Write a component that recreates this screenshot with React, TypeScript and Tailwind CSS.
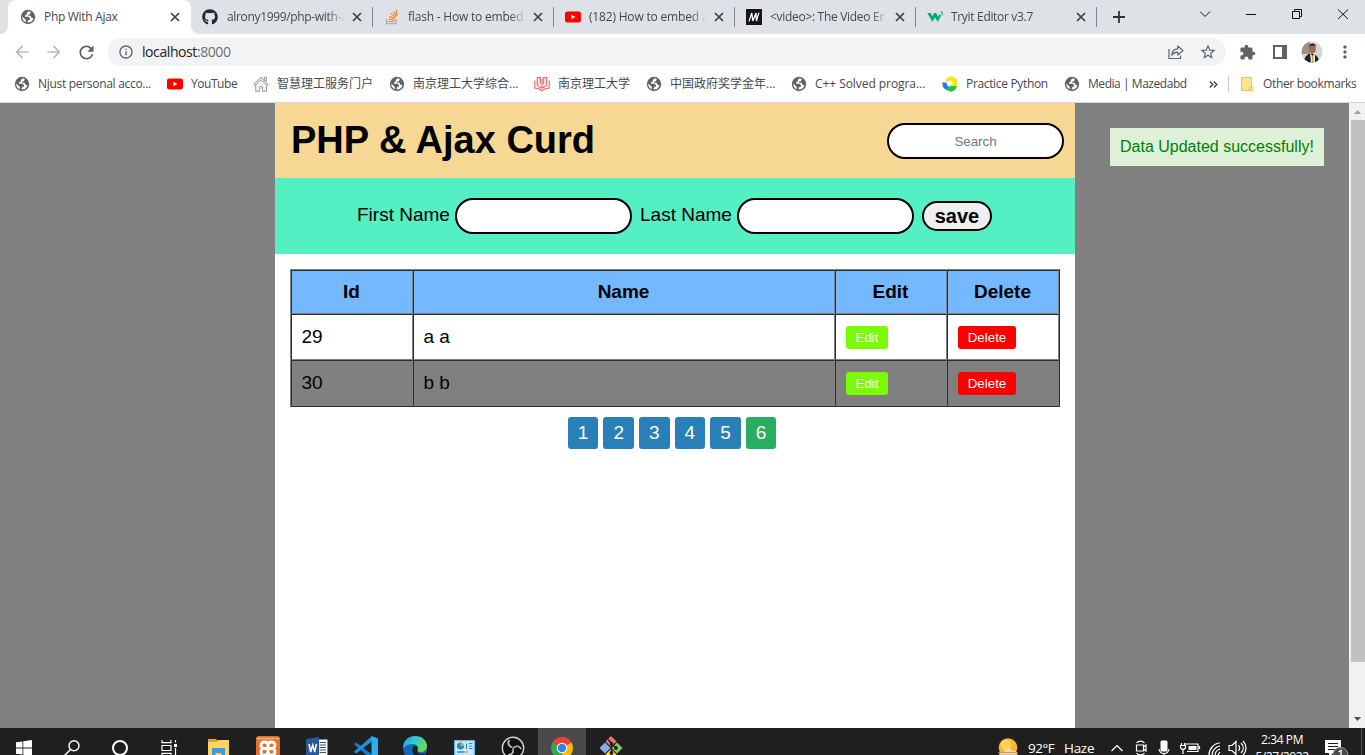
import React from "react";
import { FaGithub } from "react-icons/fa";
import {
  MdArrowBack,
  MdArrowForward,
  MdExtension,
  MdInfoOutline,
  MdMoreVert,
  MdRefresh,
  MdStarBorder,
} from "react-icons/md";

type IconProps = { className?: string };

const Globe = ({ className = "" }: IconProps) => (
  <svg viewBox="0 0 16 16" className={`size-4 shrink-0 ${className}`}>
    <circle cx="8" cy="8" r="7.2" fill="#5f6368" />
    <path d="M8.6 2.2 6.8 4v1.6L5 6.6v1.2h3.6l1.3 1.3v1.6H8.4l-1 2.8c3 .3 5.4-1.4 6-4.6h-1.7l-1.2-2.2H8.1V5.600h1.7l1-2.6z" fill="#fff" />
    <path d="M2.3 7.5 5.8 11v2.2A5.8 5.8 0 0 1 2.3 7.5z" fill="#fff" />
  </svg>
);

const YouTube = () => (
  <svg viewBox="0 0 16 16" className="size-4 shrink-0">
    <rect y="2.4" width="16" height="11.2" rx="2.4" fill="#f00" />
    <path d="M6.4 5.7v4.6l4-2.3z" fill="#fff" />
  </svg>
);

const StackOverflow = () => (
  <svg viewBox="0 0 16 16" className="size-4 shrink-0" fill="none">
    <path d="M2.5 10v4.6h9.6V10" stroke="#a9adb1" strokeWidth="1.3" />
    <path d="M4.2 12.5h6.2M4.4 10l6.1 1M5.1 7.2l5.7 2.4M6.9 4.4l4.6 4M9.6 2.2l3 5.2M12.3.7l.9 5.6" stroke="#f48024" strokeWidth="1.15" />
  </svg>
);

const Mdn = () => (
  <svg viewBox="0 0 16 16" className="size-4 shrink-0">
    <rect width="16" height="16" fill="#15141a" />
    <path d="M3 12.4 5.8 4 6.800 12 10 4 10.400 12 12.900 3.600" stroke="#fff" strokeWidth="1.3" fill="none" />
  </svg>
);

const W3 = () => (
  <svg viewBox="0 0 18 16" className="h-4 w-[18px] shrink-0">
    <path d="M.3 4h3.5l1.5 3.5L7 4h2.2l2 3.8L12.6 5l1.2 2.3-3 5.4L8 8.600l-2.6 4.1z" fill="#04aa6d" />
    <path d="M13.6 3h2.1l-1 1.4c1.6.1 1.3 2.2-1 1.8" stroke="#04aa6d" strokeWidth=".9" fill="none" />
  </svg>
);

const House = () => (
  <svg viewBox="0 0 16 16" className="size-4 shrink-0" fill="#f2f2f2" stroke="#9b9b9b" strokeWidth="1">
    <path d="M11.4 1h2v4h-2zM2.7 8.3v7h4v-4.6h2.8v4.6h4v-7L8 3.2z" />
    <path d="M.7 8.4 8 1.3l7.3 7.1-1.2 1.1L8 3.8 1.9 9.5z" />
  </svg>
);

const RedBook = () => (
  <svg viewBox="0 0 16 16" className="size-4 shrink-0" fill="none" stroke="#f06a6e" strokeWidth="1.2">
    <path d="M3.300 1v8.500L8 12.200l4.700-2.700V1M3.300 1.600h3v7M12.700 1.600h-3v7M8 2.500v9" />
    <path d="M.8 4.500v7.700l3.400.3L8 14.800l3.800-2.3 3.400-.3V4.500" />
  </svg>
);

const Python = () => (
  <svg viewBox="0 0 16 16" className="size-4 shrink-0">
    <path d="M3.400 4.600C4 1.600 6.600.4 9.400.5c4 .2 6.200 3 6 6.400-.1 2.500-1.400 4-3.800 4.100L8 11c-1-.2-.500-1.500.500-1.700 3-.3 3-3.300.8-4.300-1.500-.6-3 .1-3.800 1z" fill="#efe81a" />
    <path d="M.5 6.500h4.200c-.3 2.500.8 4 3.300 4.200l-2.800 2.600c.5 1 0 1.200-.7.800C1.500 12.600-.2 10 .5 6.500z" fill="#2878f0" />
    <path d="m6 12 2.500-1.800 6.400-.3c-.8 3.300-3.100 5.600-6.200 5.600-1.700 0-3-.6-4.100-1.700z" fill="#19c43c" />
  </svg>
);

const Cross = () => (
  <svg viewBox="0 0 10 10" className="size-[10px] shrink-0" stroke="#3c4043" strokeWidth="1.7">
    <path d="m1 1 8 8M9 1 1 9" />
  </svg>
);

const tabs = [
  { icon: <span className="-ml-px w-[18px]"><FaGithub size={16} color="#24292f" /></span>, title: "alrony1999/php-with-a", sep: false, track: "tracking-[-0.34px]" },
  { icon: <StackOverflow />, title: "flash - How to embed", sep: true, track: "tracking-[-0.2px]" },
  { icon: <YouTube />, title: "(182) How to embed a", sep: true, track: "tracking-[-0.18px]" },
  { icon: <Mdn />, title: "<video>: The Video Er", sep: true, track: "tracking-[-0.3px]" },
  { icon: <W3 />, title: "Tryit Editor v3.7", sep: true, track: "tracking-[-0.32px]" },
];

const TabStrip = () => (
  <div className="flex h-[34px] shrink-0 bg-[#dee1e6] text-xs text-[#45494d]">
    <div className="flex w-2 items-end bg-white">
      <div className="h-full w-2 rounded-br-[8px] bg-[#dee1e6]" />
    </div>
    <div className="w-[183px] bg-[#dee1e6]">
      <div className="flex h-full items-center rounded-t-[8px] bg-white pl-3">
        <Globe />
        <span className="ml-2 w-[126px] tracking-[-0.3px] whitespace-nowrap">Php With Ajax</span>
        <Cross />
      </div>
    </div>
    <div className="w-0">
      <div className="flex h-full w-2 items-end">
        <div className="size-2 bg-white"><div className="size-2 rounded-bl-[8px] bg-[#dee1e6]" /></div>
      </div>
    </div>
    {tabs.map((t) => (
      <div key={t.title} className="flex w-[181px] items-center">
        <div className={t.sep ? "h-5 w-px bg-[#80868b]" : "h-5 w-px"} />
        <div className="ml-[11px] flex w-6 shrink-0">{t.icon}</div>
        <span className={`w-[118px] shrink-0 whitespace-nowrap [mask-image:linear-gradient(to_right,#000_86%,transparent)] ${t.track}`}>
          {t.title}
        </span>
        <div className="ml-[7px] flex"><Cross /></div>
      </div>
    ))}
    <div className="flex w-[50px] items-center">
      <div className="h-5 w-px bg-[#80868b]" />
      <svg viewBox="0 0 12 12" className="ml-4 size-3" stroke="#303336" strokeWidth="1.8">
        <path d="M6 0v12M0 6h12" />
      </svg>
    </div>
    <svg viewBox="0 0 165 34" className="ml-auto h-[34px] w-[165px]" fill="none" stroke="#111">
      <path d="m0 11.500 5 5 5-5" />
      <path d="M46 14.500h10" />
      <path d="M92.500 11.500h7v7h-7zM94.500 11.500v-2h7v7h-2" />
      <path d="m138 9.500 10 9.500M148 9.500l-10 9.500" />
    </svg>
  </div>
);

const Avatar = () => (
  <svg viewBox="0 0 22 22" className="size-[22px]">
    <defs>
      <clipPath id="avatar"><circle cx="11" cy="11" r="10.500" /></clipPath>
    </defs>
    <g clipPath="url(#avatar)">
      <rect width="22" height="22" fill="#d8d6d4" />
      <path d="M0 0h9v13H0z" fill="#9c9187" />
      <path d="M3 22c0-6 3-9 7-9.500 5 .5 8 3.500 8 9.500z" fill="#20222b" />
      <path d="m9 12 2.500 3 2.500-3v10h-4z" fill="#e9e6d8" />
      <path d="M11 15h1.200v7H11z" fill="#b8a53c" />
      <ellipse cx="11.500" cy="7.800" rx="3.300" ry="4.500" fill="#9b6a50" />
      <path d="M8 6.500C7.500 1 15.500 1 15 6.500l-1-2H9z" fill="#191516" />
    </g>
  </svg>
);

const Toolbar = () => (
  <div className="flex h-9 shrink-0 items-center bg-white text-[#5f6368]">
    <MdArrowBack size={20} className="ml-3 text-[#babcbe]" />
    <MdArrowForward size={20} className="ml-3 text-[#babcbe]" />
    <MdRefresh size={21} className="ml-3 -mr-px" />
    <div className="ml-3 flex h-7 w-[1118px] items-center rounded-full bg-[#f1f3f4] pl-[10px]">
      <MdInfoOutline size={16} />
      <span className="ml-2 w-[1018px] pb-px text-[14px] tracking-[-0.42px] text-[#6a6e73]">
        <span className="text-[#202124]">localhost</span>:8000
      </span>
      <svg viewBox="0 0 16 16" className="ml-2 size-4" fill="none" stroke="#5f6368" strokeWidth="1.2">
        <path d="M1 5v9.500h11.500v-3" />
        <path d="M3.800 11.300C4 7 6.300 5 9.800 4.900V2l5.200 4.600-5.200 4.400V8.200c-3-.1-4.700.9-6 3.100z" strokeLinejoin="round" />
      </svg>
      <MdStarBorder size={18} className="ml-[15px]" />
    </div>
    <MdExtension size={17} className="ml-[13px]" />
    <svg viewBox="0 0 14 14" className="ml-[17px] size-[14px]">
      <path d="M0 0h14v14H0zM2 2v10h7V2z" fill="#5f6368" fillRule="evenodd" />
    </svg>
    <div className="ml-[14px]"><Avatar /></div>
    <MdMoreVert size={20} className="ml-[12px]" />
  </div>
);

const bookmarks = [
  { icon: <Globe />, text: "Njust personal acco...", cls: "w-[153px] tracking-[-0.3px]" },
  { icon: <YouTube />, text: "YouTube", cls: "w-[86px] tracking-[-0.45px]" },
  { icon: <House />, text: "智慧理工服务门户", cls: "w-[136px]" },
  { icon: <Globe />, text: "南京理工大学综合...", cls: "w-[145px]" },
  { icon: <RedBook />, text: "南京理工大学", cls: "w-[112px]" },
  { icon: <Globe />, text: "中国政府奖学金年...", cls: "w-[145px]" },
  { icon: <Globe />, text: "C++ Solved progra...", cls: "w-[151px] tracking-[-0.06px]" },
  { icon: <Python />, text: "Practice Python", cls: "w-[122px] tracking-[-0.34px]" },
  { icon: <Globe />, text: "Media | Mazedabd", cls: "w-[145px] tracking-[-0.45px]" },
];

const BookmarkBar = () => (
  <div className="flex h-[33px] shrink-0 items-center border-b border-[#d5d7da] bg-white pb-[4px] pl-[14px] text-xs whitespace-nowrap text-[#45494d]">
    {bookmarks.map((b) => (
      <div key={b.text} className={`flex shrink-0 items-center gap-2 ${b.cls}`}>
        {b.icon}
        <span>{b.text}</span>
      </div>
    ))}
    <svg viewBox="0 0 9 7" className="h-[7px] w-[9px] shrink-0" fill="none" stroke="#45494d" strokeWidth="1.4">
      <path d="m.8.5 3 3-3 3M4.800.5l3 3-3 3" />
    </svg>
    <div className="ml-[10px] h-4 w-px bg-[#c4c7ca]" />
    <svg viewBox="0 0 14 14" className="ml-[12px] size-[14px] shrink-0">
      <path d="M.500.5h10v9.500h1v3.500h-11z" fill="#ffe48f" stroke="#e9c84f" />
      <path d="M8.500 13v-3h2" fill="none" stroke="#e9c84f" />
    </svg>
    <span className="ml-[8px] tracking-[-0.34px]">Other bookmarks</span>
  </div>
);

const rows = [
  { id: 29, name: "a a", bg: "bg-white" },
  { id: 30, name: "b b", bg: "bg-[#808080]" },
];

const field = "h-9 w-[177px] rounded-[18px] border-2 border-black bg-white text-center text-[13.333px] placeholder:text-[#757575]";
const cell = "border border-[#808080] [border-style:inset] py-[10px] pr-[10.500px] pl-[9.500px]";
const buttonCell = "border border-[#808080] [border-style:inset] p-[10px]";
const small = "block h-[23px] rounded-[3px] text-center text-[13.333px] leading-[23px] text-white";

const WebPage = () => (
  <div className="flex h-[625px] shrink-0 bg-[#808080] font-['Liberation_Sans',Arial,sans-serif] text-[19px] leading-[22px] text-black">
    <main className="ml-[275px] w-[800px] bg-white">
      <header className="flex h-[75px] items-start justify-between bg-[#f7d794] pr-[11px] pl-[16px]">
        <h1 className="mt-[15px] text-[38px] leading-[44px] font-bold">PHP &amp; Ajax Curd</h1>
        <input className={`mt-5 ${field}`} placeholder="Search" />
      </header>
      <form className="flex h-[76px] items-start bg-[#55efc4] pt-5 pl-[82px] whitespace-nowrap">
        <label className="mt-[6px] w-[98px]">First Name</label>
        <input className={field} />
        <label className="mt-[6px] ml-2 w-[97px]">Last Name</label>
        <input className={field} />
        <button type="button" className="mt-[3px] ml-2 h-[30px] w-[70px] rounded-[15px] border-2 border-black bg-[#efefef] text-[20px] font-bold">
          save
        </button>
      </form>
      <table className="mt-[15px] ml-[15px] w-[770px] table-fixed border-separate border-spacing-0 border border-[#808080] [border-style:outset]">
        <thead>
          <tr className="bg-[#74b9ff]">
            <th className={`w-[122px] ${cell}`}>Id</th>
            <th className={`w-[422px] ${cell}`}>Name</th>
            <th className={`w-[112px] ${cell}`}>Edit</th>
            <th className={`w-[112px] ${cell}`}>Delete</th>
          </tr>
        </thead>
        <tbody>
          {rows.map((r) => (
            <tr key={r.id} className={`h-[46px] ${r.bg}`}>
              <td className={cell}>{r.id}</td>
              <td className={cell}>{r.name}</td>
              <td className={buttonCell}><button className={`mt-px w-[42px] bg-[#7cfc00] ${small}`}>Edit</button></td>
              <td className={buttonCell}><button className={`mt-px w-[58px] bg-[#ff0000] ${small}`}>Delete</button></td>
            </tr>
          ))}
        </tbody>
      </table>
      <nav className="mt-[10px] flex justify-center pr-[0.800px] text-white">
        {[1, 2, 3, 4, 5].map((n) => (
          <a key={n} className="mr-[5px] rounded-[3px] bg-[#2980b9] px-[10px] py-[5px]">{n}</a>
        ))}
        <a className="mr-[5px] rounded-[3px] bg-[#27ae60] px-[10px] py-[5px]">6</a>
      </nav>
    </main>
    <div className="mt-[25px] ml-[35px] h-[38px] w-[214px] bg-[#dff0d8] p-[10px] text-[16px] leading-[18px] whitespace-nowrap text-[#008000]">
      Data Updated successfully!
    </div>
    <div className="ml-auto flex w-4 flex-col items-end bg-[#f1f1f1]">
      <svg viewBox="0 0 16 17" className="h-[17px] w-4"><path d="M5 11h7L8.500 7z" fill="#a3a3a3" /></svg>
      <div className="h-[542px] w-[14px] bg-[#c1c1c1]" />
      <svg viewBox="0 0 16 17" className="mt-auto h-[17px] w-4"><path d="M5 6h7l-3.500 4z" fill="#505050" /></svg>
    </div>
  </div>
);

const Slot = ({ children, active = false }: { children: React.ReactNode; active?: boolean }) => (
  <div className={`flex h-10 w-[49px] shrink-0 items-center justify-center ${active ? "border-r border-[#1f1f1f] bg-[#4a4a4a]" : "pr-px"}`}>{children}</div>
);

const Taskbar = () => (
  <div className="flex h-10 shrink-0 bg-[#1f1f1f] text-white">
    <Slot>
      <svg viewBox="0 0 16 16" className="size-4" fill="#fff">
        <path d="M0 2.300 6.500 1.400v6.200H0zM7.300 1.200 16 0v7.600H7.300zM0 8.400h6.500v6.200L0 13.700zM7.300 8.400H16V16l-8.700-1.200z" />
      </svg>
    </Slot>
    <div className="-ml-px flex">
      <Slot>
        <svg viewBox="0 0 16 16" className="size-4" fill="none" stroke="#fff" strokeWidth="1.400">
          <circle cx="10" cy="5.800" r="5" /><path d="M6.500 9.500.700 15.300" />
        </svg>
      </Slot>
      <div className="-ml-px flex">
        <Slot><div className="size-4 rounded-full border-[2.500px] border-white" /></Slot>
      </div>
      <Slot>
        <svg viewBox="0 0 17 16" className="h-4 w-[17px]" fill="none" stroke="#fff" strokeWidth="1.200">
          <path d="M1 0v2.700h9V0M1 5.500h9v5H1zM1 16v-2.700h9V16M14.500 0v2.500M14.500 8v8" />
          <path d="M13 4h3v3h-3z" fill="#fff" stroke="none" />
        </svg>
      </Slot>
    </div>
    <div className="ml-px flex">
      <Slot>
        <svg viewBox="0 0 22 20" className="h-5 w-[22px]">
          <path d="M0 1h8l2 2h-10z" fill="#e5a50a" />
          <path d="M0 3.200h9l1-1.200h11v17H0z" fill="#ffd45f" />
          <path d="M4 10h13v9h-3.500v-4h-6v4H4z" fill="#3a9ae0" />
        </svg>
      </Slot>
      <Slot>
        <svg viewBox="0 0 24 24" className="size-6">
          <rect width="24" height="24" rx="3" fill="#e8702a" />
          <path d="M1 2.500h22" stroke="#f6b284" strokeWidth="1.500" />
          <path d="M12 9.500C12 5 5 5 5 9s3.500 3.500 7 3.500S19 13 19 9s-7-4-7 .5M12 9v7M12 15.500c0 5-7 5-7 .5s3.500-3.500 7-3.500 7-.500 7 3.500-7 4.500-7-.5" fill="none" stroke="#fff" strokeWidth="2.900" />
        </svg>
      </Slot>
      <Slot>
        <svg viewBox="0 0 22 22" className="size-[22px]">
          <path d="M12 2.500h9.500v17H12z" fill="#fff" />
          <path d="M13.500 5.500h6.500M13.500 8h6.500M13.500 10.500h6.500M13.500 13h6.500M13.500 15.500h6.500" stroke="#2b579a" />
          <path d="M0 2 13 0v22L0 20z" fill="#2b579a" />
          <path d="m3 7 1.700 8L6.700 8l2 7 1.700-8" stroke="#fff" strokeWidth="1.500" fill="none" />
        </svg>
      </Slot>
      <Slot>
        <svg viewBox="0 0 24 24" className="size-6">
          <path d="M0 8.200 2.200 6.400 18 18.500V24z" fill="#0f7fc4" />
          <path d="M0 15.800 2.200 17.600 18 5.500V0z" fill="#1a93d8" />
          <path d="m17.500 0 6.500 2.500v19L17.500 24z" fill="#29aef5" />
        </svg>
      </Slot>
      <Slot>
        <svg viewBox="0 0 24 24" className="size-6">
          <defs>
            <linearGradient id="edge" x1="0" x2="1" y1="0" y2=".5"><stop stopColor="#1c9bdc" /><stop offset=".5" stopColor="#36c8d0" /><stop offset="1" stopColor="#63d858" /></linearGradient>
          </defs>
          <circle cx="12" cy="12" r="12" fill="#1568b8" />
          <path d="M0 12C0 5 5 0 12 0c7.500 0 12 5 12 10 0 4-3 6-6.500 6-2.500 0-3.500-1-3-2 1.500-3-1-6-5-6-5 0-8 3-9.500 4z" fill="url(#edge)" />
          <path d="M12 9.500c-2 1-3 3-2.500 5.500 1 5 6 7 10 5l3-3c-4 2-9 1-8-3 .800-2 0-4.500-2.500-4.500z" fill="#1f1f1f" />
        </svg>
      </Slot>
      <Slot>
        <svg viewBox="0 0 21 18" className="h-[18px] w-[21px]">
          <path d="M0 1h21v16H0z" fill="#5bb9ee" /><path d="M1.200 2.200h18.600v13.600H1.200z" fill="#c9ebfb" />
          <circle cx="6.500" cy="7" r="3.600" fill="#2587d1" /><path d="M6.500 7V3.400A3.600 3.600 0 0 1 10.100 7z" fill="#f6a623" />
          <path d="M12 5h1.500M12 8h1.500M15 4.500h3.500M15 7h3.500M15 9.500h3.500M12.500 5v5" stroke="#2587d1" />
          <path d="M3 13h7" stroke="#2587d1" strokeWidth="1.500" /><path d="M10 13h4" stroke="#f6a623" strokeWidth="1.500" />
        </svg>
      </Slot>
      <Slot>
        <svg viewBox="0 0 24 24" className="size-6" fill="none" stroke="#d4d4d4">
          <circle cx="12" cy="12" r="10.700" strokeWidth="1.400" fill="#111" />
          <path d="M11.500 11.500C7.500 10.500 6.500 7 8.500 4M12.500 12c3-3 6-2 7.500 1M12 12.500c1 4-1.500 6.500-5 6.500" strokeWidth="1.600" />
          <path d="M7 5c-1 4 1 6.500 4 6.500M20 12c-3-3-6-2-7.500.5M7.500 20c4-.5 5.500-3.500 4.500-7" stroke="#8c8c8c" />
        </svg>
      </Slot>
      <Slot active>
        <svg viewBox="0 0 22 22" className="size-[22px]">
          <path d="M11 11 1.500 5.500A11 11 0 0 1 20.500 5.500z" fill="#ea4335" />
          <path d="M11 11 20.500 5.500A11 11 0 0 1 11 22z" fill="#fbbc05" />
          <path d="M11 11v11A11 11 0 0 1 1.500 5.500z" fill="#34a853" />
          <path d="M11 0v6h9.500A11 11 0 0 0 11 0z" fill="#ea4335" />
          <circle cx="11" cy="11" r="5.300" fill="#fff" /><circle cx="11" cy="11" r="4.200" fill="#3b7ded" />
        </svg>
      </Slot>
      <Slot>
        <svg viewBox="0 0 24 24" className="size-6">
          <path d="m12 0 5.500 5.500L12 11 6.500 5.500z" fill="#f0706f" />
          <path d="m6 6.500 5.500 5.500L6 17.500.5 12z" fill="#85aef0" />
          <path d="m18 6.500 5.500 5.500-5.500 5.500-5.500-5.500z" fill="#8bc769" />
          <path d="m12 13 5.500 5.500L12 24l-5.500-5.500z" fill="#f6d34d" />
          <path d="M9 3.500 12.500 7v11M12.500 7.500 17 12" stroke="#222" strokeWidth="1.500" fill="none" />
          <circle cx="12.500" cy="8" r="1.900" fill="#222" /><circle cx="17" cy="12" r="1.900" fill="#222" /><circle cx="12.500" cy="17" r="1.900" fill="#222" />
        </svg>
      </Slot>
    </div>
    <div className="ml-auto flex w-[367px] items-center">
      <svg viewBox="0 0 22 20" className="h-5 w-[22px] shrink-0">
        <circle cx="10" cy="9.500" r="9.300" fill="#ffb62e" />
        <circle cx="8" cy="7" r="5.500" fill="#ffd35a" />
        <path d="M1 17c0-3 3-4 5-3 1-4 7-4.500 8.500-1 3-1 5 1 5 4z" fill="#f2d9b1" />
        <path d="M0 14.500h20M2 17h18" stroke="#c28d51" strokeWidth=".8" />
      </svg>
      <div className="ml-[8px] flex w-[83px] text-[13.500px]">
        <span className="w-9 tracking-[-0.5px]">92°F</span>
        <span className="tracking-[-0.3px]">Haze</span>
      </div>
      <svg viewBox="0 0 136 40" className="h-10 w-[136px] shrink-0" fill="none" stroke="#fff" strokeWidth="1.200">
        <path d="M.500 23 6 17.500l5.500 5.500" />
        <path d="M25.500 15c2-2.500 6-2.500 8 0M25.500 25c2 2.500 6 2.500 8 0M25.500 17h7v6h-7zM32.500 19l2.500-2v6l-2.500-2" />
        <rect x="49.500" y="12.500" width="7" height="11" rx="1.500" fill="#fff" stroke="none" /><path d="M48 21c1 6 9 6 10 0M53 25v3" />
        <path d="M74 16h13v7.500H76M88.500 18v3M70.500 15v2M73.500 15v2M69.500 17.500h5v1.500c0 3-5 3-5 0zM72 21v5" />
        <path d="M77.500 18h8v4h-8z" fill="#fff" stroke="none" />
        <path d="M98 27c0-6 5-12 11-12M101 28c0-5 3-9.500 8-10M104 28c0-3 2-6 5-7M107 28c0-2 1-3 2-4" />
        <path d="M118 17.500h3l4-4v13l-4-4h-3zM127.500 17c1.500 2 1.500 4 0 6M130 15c3 3 3 7 0 10M132 13c4 4 4 10 0 14" />
      </svg>
      <div className="flex w-[70px] shrink-0 flex-col items-center text-xs leading-[17px] tracking-[-0.4px] whitespace-nowrap">
        <span>2:34 PM</span>
        <span>5/27/2022</span>
      </div>
      <svg viewBox="0 0 30 40" className="ml-[7px] h-10 w-[30px] shrink-0">
        <path d="M1 12h16v13H9l-4 4v-4H1z" fill="#fff" />
        <path d="M4 15.500h10M4 18.500h10M4 21.500h7" stroke="#1f1f1f" />
        <circle cx="16.500" cy="27" r="7.500" fill="#4a4a4a" stroke="#9a9a9a" />
        <path d="m14.500 24 2.500-1.500V31" stroke="#fff" strokeWidth="1.300" fill="none" />
      </svg>
      <div className="ml-auto h-10 w-px shrink-0 bg-[#555]" />
      <div className="w-[3px] shrink-0" />
    </div>
  </div>
);

export default function App() {
  return (
    <div className="flex h-[755px] w-[1365px] flex-col overflow-hidden bg-white font-['Open_Sans','Noto_Sans_CJK_SC',sans-serif]">
      <TabStrip />
      <Toolbar />
      <BookmarkBar />
      <WebPage />
      <Taskbar />
    </div>
  );
}
